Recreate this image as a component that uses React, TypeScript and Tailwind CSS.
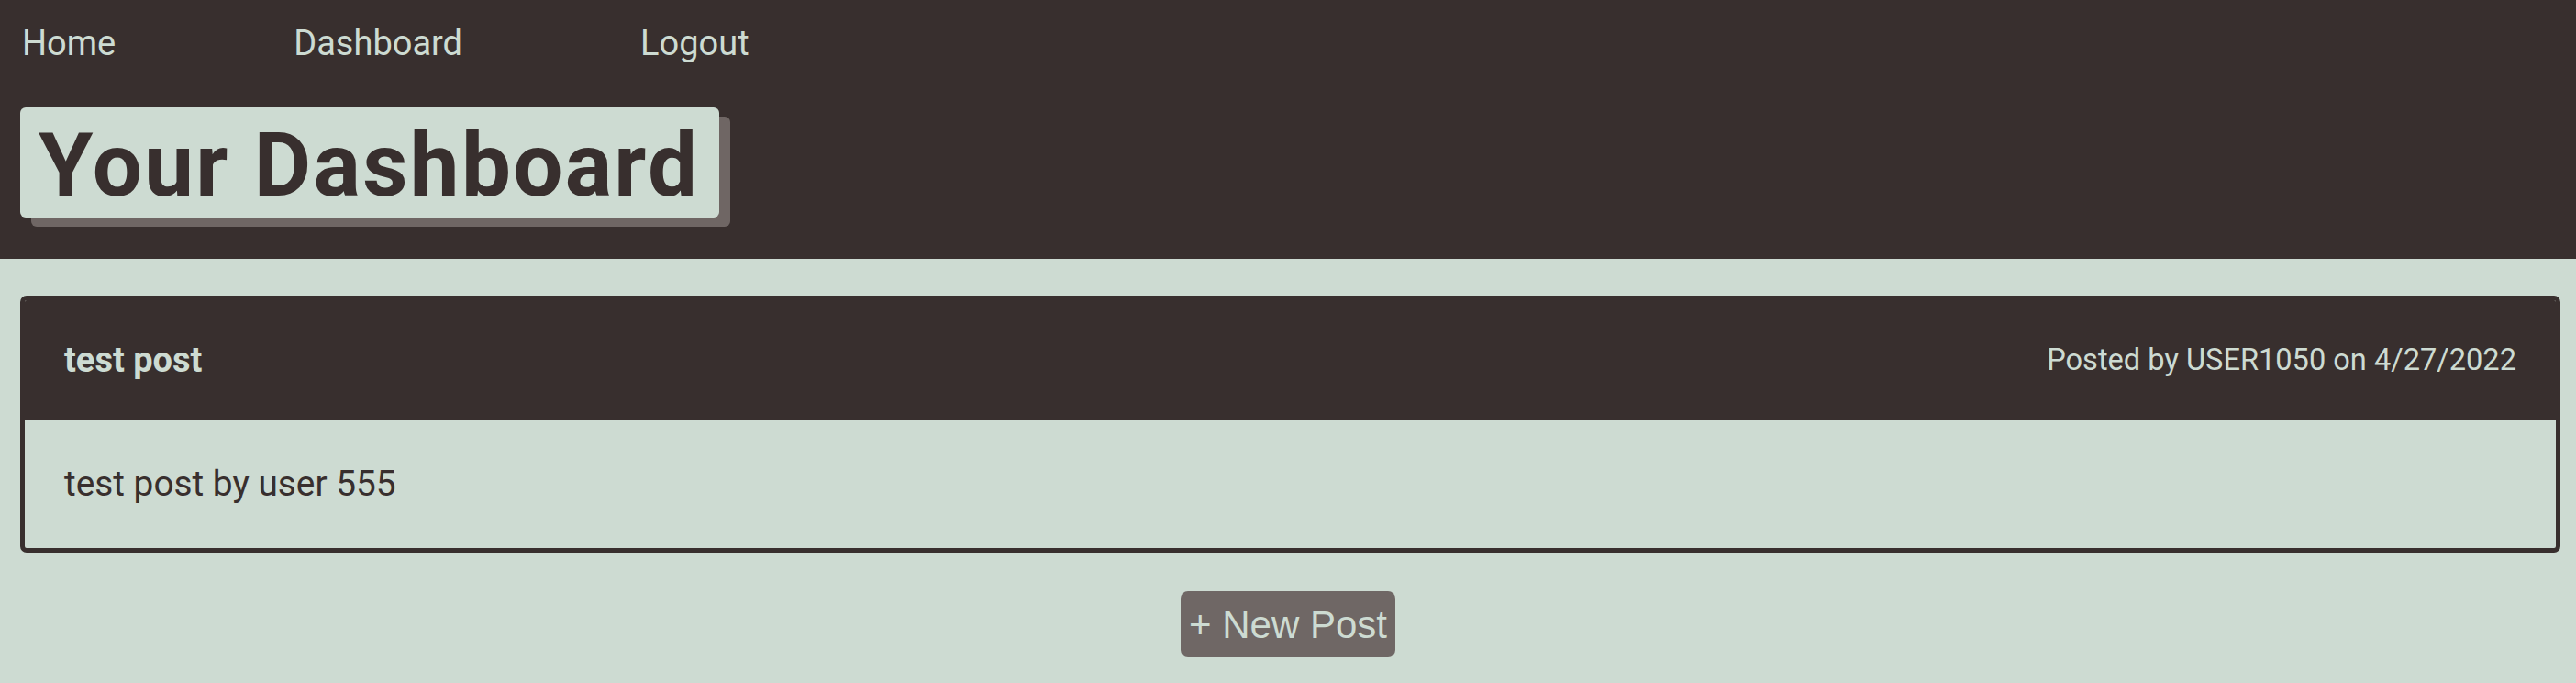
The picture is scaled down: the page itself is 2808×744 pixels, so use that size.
import React from 'react';

const App: React.FC = () => {
  return (
    <div className="min-h-screen bg-[#cddbd2] font-['Roboto',sans-serif]">
      {/* Top header */}
      <header className="bg-[#382f2e] pl-[22px] pb-[45px]">
        <nav className="flex gap-[194px] pl-[2px] pt-[19px] text-[38px] leading-[1.5] text-[#cddbd2]">
          <a href="#">Home</a>
          <a href="#">Dashboard</a>
          <a href="#">Logout</a>
        </nav>
        <div className="mt-[41px]">
          <h1 className="inline-block rounded-[6px] bg-[#cddbd2] pl-[20px] pr-[22px] pt-[15px] pb-[9px] text-[96px] font-bold leading-none tracking-[2.3px] text-[#382f2e] shadow-[12px_10px_0_0_#6f6664]">
            Your Dashboard
          </h1>
        </div>
      </header>

      <main className="pt-[40px]">
        <div className="ml-[22px] mr-[17px] overflow-hidden rounded-[7px] border-[5px] border-[#382f2e]">
          <div className="flex h-[130px] items-center justify-between bg-[#382f2e] px-[43px] text-[#cddbd2]">
            <h2 className="text-[38px] font-bold">test post</h2>
            <p className="text-[32.6px]">Posted by USER1050 on 4/27/2022</p>
          </div>
          <div className="flex h-[140px] items-center px-[43px] text-[38.8px] text-[#382f2e]">
            test post by user 555
          </div>
        </div>

        <div className="flex justify-center pt-[42px]">
          <button className="h-[72px] w-[234px] rounded-[8px] bg-[#6f6765] font-['Liberation_Sans',sans-serif] text-[42px] text-[#cddbd2]">
            + New Post
          </button>
        </div>
      </main>
    </div>
  );
};

export default App;
